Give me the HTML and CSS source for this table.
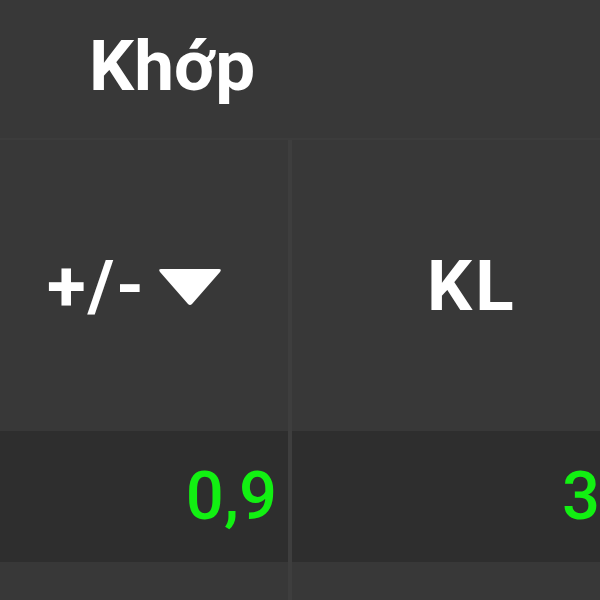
FILE: index.html
```html
<!DOCTYPE html>
<html>
  <head>
    <meta charset="UTF-8" />
    <title>Khớp</title>
    <link rel="stylesheet" href="styles.css">
  </head>
  <body>
    <div class="board">
      <div class="group-row">
        <div class="group-title">Khớp</div>
      </div>

      <div class="head-row">
        <div class="cell head first">
          <span class="sign">+/-</span>
          <svg class="sort-arrow" width="64" height="38" viewBox="0 0 64 38">
            <path d="M3 1 L61 1 Q64 1 62 4 L34 36 Q32 38 30 36 L2 4 Q0 1 3 1 Z" fill="#ffffff" />
          </svg>
        </div>
        <div class="cell head second">KL</div>
      </div>

      <div class="data-row">
        <div class="cell num first up">0,9</div>
        <div class="cell num second up">3</div>
      </div>

      <div class="data-row alt">
        <div class="cell num first"></div>
        <div class="cell num second"></div>
      </div>
    </div>
  </body>
</html>
```

FILE: styles.css
```css
:root {
  --panel: #383838;
  --row-dark: #2e2e2e;
  --grid-line: #3e3e3e;
  --text: #ffffff;
  --up-green: #12f012;
}

* {
  margin: 0;
  padding: 0;
  box-sizing: border-box;
}

body {
  background: var(--panel);
  color: var(--text);
  font-family: Roboto, "Liberation Sans", sans-serif;
  width: 600px;
  height: 600px;
  overflow: hidden;
}

.board {
  width: 620px;
  display: flex;
  flex-direction: column;
}

.group-row {
  height: 140px;
  border-bottom: 2px solid #3c3c3c;
  display: flex;
  align-items: center;
  padding-left: 89px;
}

.group-title {
  font-size: 71px;
  font-weight: 700;
  line-height: 1;
  margin-top: -8px;
}

.head-row,
.data-row {
  display: grid;
  grid-template-columns: 292px 328px;
}

.head-row {
  height: 291px;
}

.data-row {
  height: 131px;
  background: var(--row-dark);
}

.data-row.alt {
  height: 60px;
  background: var(--panel);
}

.cell {
  display: flex;
  align-items: center;
}

.cell.first {
  border-right: 4px solid var(--grid-line);
}

.head {
  font-size: 71px;
  font-weight: 700;
  line-height: 1;
}

.head.first {
  padding-left: 47px;
}

.head .sign {
  letter-spacing: 2px;
}

.head.second {
  padding-left: 135px;
  letter-spacing: 3px;
}

.sort-arrow {
  margin-left: 12px;
  margin-top: 2px;
}

.num {
  justify-content: flex-end;
  font-size: 67px;
  font-weight: 500;
  line-height: 1;
  padding-right: 11px;
}

.num.second {
  padding-right: 20px;
}

.up {
  color: var(--up-green);
}
```
